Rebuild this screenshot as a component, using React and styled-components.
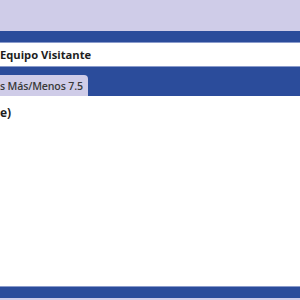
import React from "react";
import styled, { createGlobalStyle } from "styled-components";

const Global = createGlobalStyle`
  html, body { margin: 0; padding: 0; background: #ffffff; overflow: hidden; }
  body { font-family: "Open Sans", "Noto Sans", "Liberation Sans", sans-serif; }
`;

const Page = styled.div`
  width: 300px;
  height: 300px;
  display: flex;
  flex-direction: column;
  overflow: hidden;
`;

const Band = styled.div`
  height: ${(p) => p.$h}px;
  flex: none;
  background: #cfcce8;
`;

const BlueBar = styled.div`
  height: ${(p) => p.$h}px;
  flex: none;
  background: #2b4c9b;
  border-top: ${(p) => (p.$top ? "1px solid #8a9bcc" : "none")};
  border-bottom: ${(p) => (p.$bottom ? "1px solid #8a9bcc" : "none")};
`;

const TitleRow = styled.div`
  height: 23px;
  flex: none;
  display: flex;
  align-items: center;
  background: #ffffff;
  font-size: 11.2px;
  font-weight: 700;
  color: #1e1e1e;
  white-space: nowrap;
`;

const TabBar = styled.div`
  height: 29px;
  flex: none;
  display: flex;
  align-items: flex-end;
  background: #2b4c9b;
  border-top: 1px solid #8a9bcc;
  overflow: hidden;
`;

const Tab = styled.div`
  height: 21px;
  width: 88px;
  display: flex;
  align-items: center;
  background: #cfcce8;
  border-top-right-radius: 4px;
  font-size: 10.6px;
  font-weight: 600;
  letter-spacing: -0.15px;
  color: #3a3a3a;
  white-space: nowrap;
`;

const Clip = styled.span`
  display: inline-block;
  margin-left: ${(p) => p.$shift}px;
`;

const Content = styled.div`
  flex: 1;
  background: #ffffff;
  padding-top: 8px;
  font-size: 12px;
  font-weight: 700;
  color: #1e1e1e;
`;

export default function App() {
  return (
    <>
      <Global />
      <Page>
        <Band $h={31} />
        <BlueBar $h={11} $bottom />
        <TitleRow>
          <Clip $shift={0}>Equipo Visitante</Clip>
        </TitleRow>
        <TabBar>
          <Tab>
            <Clip $shift={0}>s Más/Menos 7.5</Clip>
          </Tab>
        </TabBar>
        <Content>
          <Clip $shift={0}>e)</Clip>
        </Content>
        <BlueBar $h={11} $top />
        <Band $h={2} />
      </Page>
    </>
  );
}
